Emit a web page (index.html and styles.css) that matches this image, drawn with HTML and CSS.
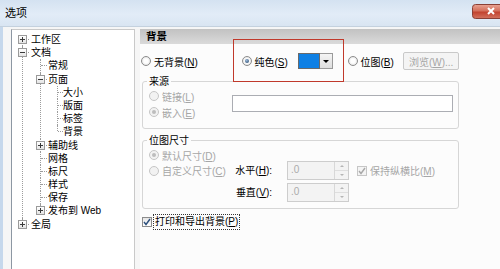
FILE: index.html
```html
<!DOCTYPE html>
<html lang="zh">
<head>
  <meta charset="UTF-8" />
  <title>选项</title>
  <link rel="stylesheet" href="styles.css">
</head>
<body>
<div class="window">
  <div class="titlebar">
    <span class="title">选项</span>
    <svg class="capbtn" width="28" height="15" viewBox="0 0 28 15">
      <defs>
        <linearGradient id="capfill" x1="0" y1="0" x2="0" y2="1">
          <stop offset="0" stop-color="#e9a494"/>
          <stop offset="0.45" stop-color="#d4705c"/>
          <stop offset="0.55" stop-color="#c2432f"/>
          <stop offset="1" stop-color="#d3735f"/>
        </linearGradient>
      </defs>
      <rect x="0.5" y="0.5" width="32" height="14" rx="3" fill="url(#capfill)" stroke="#8a4036"/>
      <path d="M16 4 L22 10 M22 4 L16 10" stroke="#fff" stroke-width="2"/>
    </svg>
  </div>

  <div class="body">
    <div class="tree">
      <ul>
        <li><span class="exp plus"></span><span class="label">工作区</span></li>
        <li><span class="exp"></span><span class="label">文档</span>
          <ul>
            <li><span class="label">常规</span></li>
            <li><span class="exp"></span><span class="label">页面</span>
              <ul>
                <li><span class="label">大小</span></li>
                <li><span class="label">版面</span></li>
                <li><span class="label">标签</span></li>
                <li><span class="label">背景</span></li>
              </ul>
            </li>
            <li><span class="exp plus"></span><span class="label">辅助线</span></li>
            <li><span class="label">网格</span></li>
            <li><span class="label">标尺</span></li>
            <li><span class="label">样式</span></li>
            <li><span class="label">保存</span></li>
            <li><span class="exp plus"></span><span class="label">发布到 Web</span></li>
          </ul>
        </li>
        <li><span class="exp plus"></span><span class="label">全局</span></li>
      </ul>
    </div>

    <div class="panel">
      <div class="header">背景</div>

      <div class="content">
        <div class="options">
          <label class="opt opt-none"><span class="radio"></span><span>无背景(<u>N</u>)</span></label>
          <div class="pick">
            <label class="opt opt-solid"><span class="radio on"></span><span>纯色(<u>S</u>)</span></label>
            <span class="swatch"></span>
            <span class="drop"><span class="tri"></span></span>
          </div>
          <label class="opt opt-bitmap"><span class="radio"></span><span>位图(<u>B</u>)</span></label>
          <span class="btn"><span>浏览(<u>W</u>)...</span></span>
        </div>

        <fieldset class="group source">
          <legend>来源</legend>
          <div class="source-grid">
            <div class="col">
              <label class="opt dim"><span class="radio off"></span><span>链接(<u>L</u>)</span></label>
              <label class="opt dim"><span class="radio off on"></span><span>嵌入(<u>E</u>)</span></label>
            </div>
            <span class="textbox"></span>
          </div>
        </fieldset>

        <fieldset class="group size">
          <legend>位图尺寸</legend>
          <div class="size-grid">
            <label class="opt dim r1"><span class="radio off on"></span><span>默认尺寸(<u>D</u>)</span></label>
            <label class="opt dim r2"><span class="radio off"></span><span>自定义尺寸(<u>C</u>)</span></label>
            <span class="field-label r2">水平(<u>H</u>):</span>
            <span class="spin r2"><span class="val">.0</span><span class="arrows"><span class="up"></span><span class="down"></span></span></span>
            <label class="opt dim keep r2">
              <span class="check off"><svg width="8" height="8" viewBox="0 0 8 8"><path d="M1 4 L3 6.5 L7 1" stroke="#a8a8a8" stroke-width="1.4" fill="none"/></svg></span><span>保持纵横比(<u>M</u>)</span>
            </label>
            <span class="field-label r3">垂直(<u>V</u>):</span>
            <span class="spin r3"><span class="val">.0</span><span class="arrows"><span class="up"></span><span class="down"></span></span></span>
          </div>
        </fieldset>

        <label class="opt print">
          <span class="check"><svg width="8" height="8" viewBox="0 0 8 8"><path d="M1 4 L3 6.5 L7 1" stroke="#2c4f7c" stroke-width="1.4" fill="none"/></svg></span>
          <span class="focus">打印和导出背景(<u>P</u>)</span>
        </label>
      </div>
    </div>
  </div>
</div>
</body>
</html>
```

FILE: styles.css
```css
* {
  margin: 0;
  padding: 0;
  box-sizing: border-box;
}

body {
  background: #f6f6f6;
  color: #000;
  font-family: "Liberation Sans", "Noto Sans CJK SC", sans-serif;
  font-size: 10px;
}

.window {
  width: 500px;
  height: 269px;
  overflow: hidden;
}

u {
  text-decoration: underline;
}

/* title bar */
.titlebar {
  height: 27px;
  display: flex;
  align-items: flex-start;
  justify-content: space-between;
  padding-left: 5px;
  background: linear-gradient(to bottom, #d4e2f1 0%, #e2ecf7 55%, #d9e5f2 100%);
  border-bottom: 1px solid #c4d1de;
}

.title {
  font-size: 11px;
  line-height: 26px;
}

.capbtn {
  display: block;
  flex: none;
  margin-top: 4px;
}

/* dialog body */
.body {
  height: 242px;
  display: flex;
  padding: 2px 0 0 8px;
  border-left: 3px solid #c6d8ec;
}

.tree {
  width: 124px;
  height: 240px;
  background: #fff;
  border: 1px solid #c9c9c9;
  border-left-color: #8d97a3;
  border-bottom: none;
}

.tree ul {
  list-style: none;
}

.tree > ul {
  padding: 3px 0 0 10px;
}

.tree li {
  position: relative;
  padding-left: 9px;
}

.tree li ul {
  margin-left: 9px;
}

.tree li li {
  padding-left: 8px;
}

.tree li li li {
  padding-left: 6px;
}

.tree .label {
  display: block;
  height: 13.2px;
  line-height: 13.2px;
  white-space: nowrap;
}

/* connector lines */
.tree li::before {
  content: '';
  position: absolute;
  left: 0;
  top: 0;
  bottom: 0;
  border-left: 1px dotted #9c9c9c;
}

.tree > ul > li:first-child::before {
  top: 6px;
}

.tree li:last-child::before {
  bottom: auto;
  height: 6px;
}

.tree li::after {
  content: '';
  position: absolute;
  left: 1px;
  top: 6px;
  width: 6px;
  border-top: 1px dotted #9c9c9c;
}

.tree li li li::after {
  width: 5px;
}

.exp {
  position: absolute;
  left: -4px;
  top: 2px;
  width: 9px;
  height: 9px;
  z-index: 1;
  border: 1px solid #9a9a9a;
  background: linear-gradient(to bottom, #fff, #e4e4e4);
}

.exp::before {
  content: '';
  position: absolute;
  left: 1px;
  top: 3px;
  width: 5px;
  height: 1px;
  background: #3a3a3a;
}

.exp.plus::after {
  content: '';
  position: absolute;
  left: 3px;
  top: 1px;
  width: 1px;
  height: 5px;
  background: #3a3a3a;
}

/* right panel */
.panel {
  flex: 1;
  margin-left: 5px;
  background: #fcfcfc;
}

.header {
  height: 15px;
  padding-left: 6px;
  font-size: 10.5px;
  font-weight: bold;
  line-height: 15px;
  background: linear-gradient(to bottom, #c2c2c2, #dadada);
}

.content {
  width: 319px;
  padding-left: 2px;
}

.opt {
  display: flex;
  align-items: center;
  gap: 3px;
  white-space: nowrap;
}

.dim {
  color: #a6a6a6;
}

.radio {
  position: relative;
  flex: none;
  width: 10px;
  height: 10px;
  border-radius: 50%;
  border: 1px solid #8c8c8c;
  background: radial-gradient(circle, #fff 0 35%, #d8d8d8 100%);
}

.radio.on::after {
  content: '';
  position: absolute;
  inset: 2px;
  border-radius: 50%;
  background: radial-gradient(circle at 40% 35%, #9ab8d8, #1c3d63);
}

.radio.off {
  border-color: #c6c6c6;
  background: #f2f2f2;
}

.radio.off.on::after {
  background: #bdbdbd;
}

.check {
  flex: none;
  width: 10px;
  height: 10px;
  display: flex;
  align-items: center;
  justify-content: center;
  border: 1px solid #8c8c8c;
  background: linear-gradient(to bottom, #e6e6e6, #fff);
}

.check.off {
  border-color: #c6c6c6;
  background: #f4f4f4;
}

/* first row */
.options {
  height: 18px;
  margin-top: 8px;
  display: flex;
  align-items: center;
}

.opt-none {
  width: 101px;
  margin-left: -1px;
}

.pick {
  position: relative;
  display: flex;
  align-items: center;
  height: 18px;
}

/* annotation frame drawn over the colour picker */
.pick::after {
  content: '';
  position: absolute;
  top: -13px;
  bottom: -12px;
  left: -9px;
  right: -11px;
  border: 1px solid #c0392b;
  pointer-events: none;
}

.opt-solid {
  width: 56px;
}

.swatch {
  width: 22px;
  height: 16px;
  border: 1px solid #6a6a6a;
  background: #0f80e4;
}

.drop {
  width: 13px;
  height: 16px;
  display: flex;
  align-items: center;
  justify-content: center;
  border: 1px solid #9a9a9a;
  border-left: none;
  background: linear-gradient(to bottom, #f4f4f4, #dedede);
}

.tri {
  border-left: 3px solid transparent;
  border-right: 3px solid transparent;
  border-top: 3px solid #000;
}

.opt-bitmap {
  width: 56px;
  margin-left: 15px;
}

.btn {
  width: 56px;
  height: 18px;
  display: flex;
  align-items: center;
  justify-content: center;
  color: #a6a6a6;
  border: 1px solid #c9c9c9;
  border-radius: 2px;
  background: #f4f4f4;
}

/* group boxes */
.group {
  min-width: 0;
  border: 1px solid #d6d6d6;
  border-radius: 3px;
  padding: 0 6px 8px 6px;
}

.group legend {
  margin-left: -2px;
  padding: 0 2px;
  line-height: 13px;
  font-size: 10px;
}

.source {
  margin-top: 5px;
}

.source-grid {
  display: grid;
  grid-template-columns: 83px 221px;
}

.source-grid .opt {
  height: 16px;
}

.textbox {
  height: 17px;
  margin-top: 7px;
  border: 1px solid #abadb3;
  background: #fff;
}

.size {
  margin-top: 5px;
  padding-bottom: 6px;
}

.size-grid {
  display: grid;
  grid-template-columns: 83px 55px 62px auto;
  grid-template-rows: 14px 19px 22px;
  align-items: center;
}

.r1 {
  grid-row: 1;
  grid-column: 1;
  margin-top: 2px;
}

.r2 {
  grid-row: 2;
}

.r3 {
  grid-row: 3;
  align-self: end;
}

.opt.r2 {
  grid-column: 1;
}

.field-label {
  grid-column: 2;
  text-align: right;
  padding-right: 15px;
  line-height: 19px;
  white-space: nowrap;
}

.spin {
  grid-column: 3;
  height: 19px;
  display: flex;
  border: 1px solid #cdcdcd;
  background: #f3f3f3;
}

.spin .val {
  flex: 1;
  color: #ababab;
  padding: 1px 3px;
  line-height: 13px;
}

.spin .arrows {
  width: 14px;
  display: flex;
  flex-direction: column;
  border-left: 1px solid #d8d8d8;
}

.spin .up,
.spin .down {
  flex: 1;
  display: flex;
  align-items: center;
  justify-content: center;
}

.spin .up {
  border-bottom: 1px solid #dedede;
}

.spin .up::before,
.spin .down::before {
  content: '';
  border-left: 2px solid transparent;
  border-right: 2px solid transparent;
}

.spin .up::before {
  border-bottom: 2px solid #b5b5b5;
}

.spin .down::before {
  border-top: 2px solid #b5b5b5;
}

.opt.keep {
  grid-column: 4;
  padding-left: 8px;
}

/* print checkbox */
.print {
  margin-top: 5px;
  height: 16px;
  gap: 1px;
}

.focus {
  padding: 0 1px;
  line-height: 14px;
  border: 1px dotted #333;
}
```
